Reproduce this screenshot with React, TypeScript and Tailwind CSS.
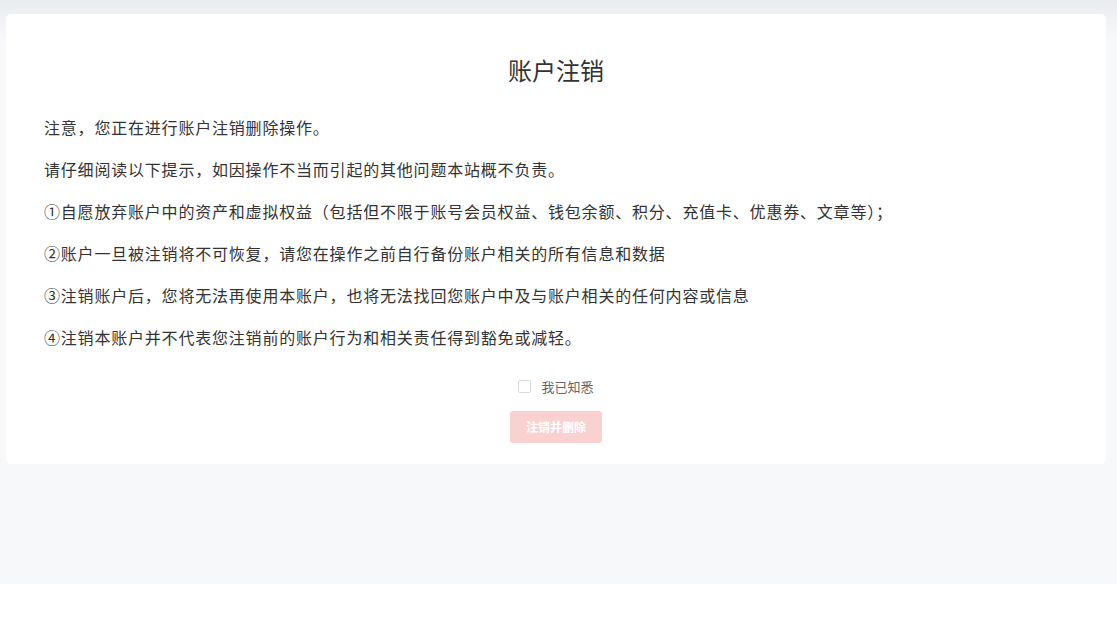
export default function App() {
  const lines = [
    "注意，您正在进行账户注销删除操作。",
    "请仔细阅读以下提示，如因操作不当而引起的其他问题本站概不负责。",
    "①自愿放弃账户中的资产和虚拟权益（包括但不限于账号会员权益、钱包余额、积分、充值卡、优惠券、文章等）；",
    "②账户一旦被注销将不可恢复，请您在操作之前自行备份账户相关的所有信息和数据",
    "③注销账户后，您将无法再使用本账户，也将无法找回您账户中及与账户相关的任何内容或信息",
    "④注销本账户并不代表您注销前的账户行为和相关责任得到豁免或减轻。",
  ];
  return (
    <div
      className="w-[1117px] h-[639px] bg-white"
      style={{ fontFamily: '"Noto Sans CJK SC", "Liberation Sans", sans-serif' }}
    >
      <div className="h-[584px] bg-gradient-to-b from-[#e9ecef] to-[#f7f8fa] to-[40px] pt-[14px] pl-[6px] pr-[11px]">
        <div className="bg-white rounded-[5px] h-[450px] px-[38px] pt-[40px]">
          <h1 className="text-center text-[24px] leading-[32px] text-[#333]">账户注销</h1>
          <div className="mt-[27px] flex flex-col gap-[13px]">
            {lines.map((l) => (
              <p key={l} className="text-[16px] leading-[29px] tracking-[0.8px] text-[#333]">{l}</p>
            ))}
          </div>
          <label className="mt-[25px] flex items-center justify-center gap-[10px] text-[13px] text-[#666]">
            <span className="w-[13px] h-[13px] border border-[#d9d9d9] rounded-[2px] bg-white" />
            我已知悉
          </label>
          <div className="mt-[14px] flex justify-center">
            <button className="w-[92px] h-[32px] rounded-[3px] bg-[#fad1d1] text-white text-[12px] font-bold">
              注销并删除
            </button>
          </div>
        </div>
      </div>
    </div>
  );
}
